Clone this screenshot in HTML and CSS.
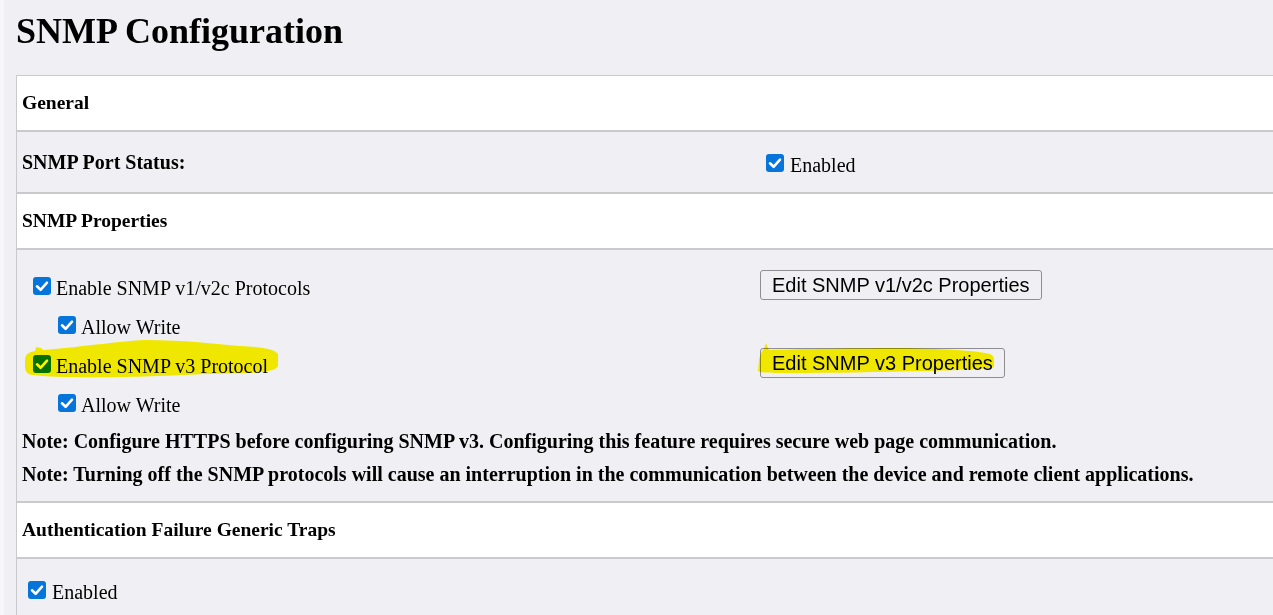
FILE: index.html
```html
<!DOCTYPE html>
<html lang="en">
<head>
<meta charset="utf-8">
<title>SNMP Configuration</title>
<link rel="stylesheet" href="styles.css">
</head>
<body>
<div class="page">
  <h1 class="title">SNMP Configuration</h1>
  <div class="panel">
    <div class="sec-head">General</div>
    <div class="row">
      <div class="label">SNMP Port Status:</div>
      <div class="value port-value"><svg class="cb" viewBox="0 0 18 18"><rect width="18" height="18" rx="3" fill="#0574db"/><path d="M4 9.3 7.6 12.8 14 5.6" fill="none" stroke="#fff" stroke-width="2.6" stroke-linecap="round" stroke-linejoin="round"/></svg>Enabled</div>
    </div>
    <div class="sec-head">SNMP Properties</div>
    <div class="props">
      <div class="prop-grid">
        <div class="opt"><svg class="cb" viewBox="0 0 18 18"><rect width="18" height="18" rx="3" fill="#0574db"/><path d="M4 9.3 7.6 12.8 14 5.6" fill="none" stroke="#fff" stroke-width="2.6" stroke-linecap="round" stroke-linejoin="round"/></svg>Enable SNMP v1/v2c Protocols</div>
        <div class="act"><button class="btn" type="button">Edit SNMP v1/v2c Properties</button></div>
        <div class="opt sub"><svg class="cb" viewBox="0 0 18 18"><rect width="18" height="18" rx="3" fill="#0574db"/><path d="M4 9.3 7.6 12.8 14 5.6" fill="none" stroke="#fff" stroke-width="2.6" stroke-linecap="round" stroke-linejoin="round"/></svg>Allow Write</div>
        <div class="act"></div>
        <div class="opt"><svg class="cb" viewBox="0 0 18 18"><rect width="18" height="18" rx="3" fill="#0574db"/><path d="M4 9.3 7.6 12.8 14 5.6" fill="none" stroke="#fff" stroke-width="2.6" stroke-linecap="round" stroke-linejoin="round"/></svg>Enable SNMP v3 Protocol</div>
        <div class="act"><button class="btn" type="button">Edit SNMP v3 Properties</button></div>
        <div class="opt sub"><svg class="cb" viewBox="0 0 18 18"><rect width="18" height="18" rx="3" fill="#0574db"/><path d="M4 9.3 7.6 12.8 14 5.6" fill="none" stroke="#fff" stroke-width="2.6" stroke-linecap="round" stroke-linejoin="round"/></svg>Allow Write</div>
        <div class="act"></div>
      </div>
      <p class="note">Note: Configure HTTPS before configuring SNMP v3. Configuring this feature requires secure web page communication.</p>
      <p class="note">Note: Turning off the SNMP protocols will cause an interruption in the communication between the device and remote client applications.</p>
    </div>
    <div class="sec-head">Authentication Failure Generic Traps</div>
    <div class="row last">
      <div class="value auth-value"><svg class="cb" viewBox="0 0 18 18"><rect width="18" height="18" rx="3" fill="#0574db"/><path d="M4 9.3 7.6 12.8 14 5.6" fill="none" stroke="#fff" stroke-width="2.6" stroke-linecap="round" stroke-linejoin="round"/></svg>Enabled</div>
    </div>
  </div>
</div>
<svg class="marker" viewBox="0 0 1273 615" width="1273" height="615" aria-hidden="true">
  <path fill="#fff600" d="M25 360 C25 354 29 352 35 351 L36 347 L41 348 L43 350 C90 346 120 341 145 340 C185 340 215 344 240 346 C262 347 275 349 278 354 L278 366 C277 370 268 372 250 373 C190 374 150 377 120 377 C80 378 50 377 32 375 C26 374 25 370 25 366 Z"/>
  <path fill="#fff600" d="M758 371 L759 360 C760 354 762 351 764 349 L766 343 L769 350 C800 349 860 348 905 348 C950 349 980 351 990 354 C994 356 994 358 994 362 L994 367 C992 369 960 370 930 371 C880 372 830 373 790 373 C770 373 760 373 758 371 Z"/>
</svg>
</body>
</html>
```

FILE: styles.css
```css
html, body {
  margin: 0;
  height: 100%;
}

body {
  position: relative;
  background: #f0f0f4;
  overflow: hidden;
  color: #000;
  font-family: "Liberation Serif", "Times New Roman", serif;
  font-size: 20px;
}

.page {
  border-left: 4px solid #f7f7f9;
  padding-left: 12px;
  min-height: 615px;
  box-sizing: border-box;
}

.title {
  margin: 0 0 23px;
  padding-top: 10px;
  height: 42px;
  line-height: 42px;
  font-size: 36px;
  font-weight: bold;
}

.panel {
  border-top: 1px solid #c9c9ce;
  border-left: 1px solid #c9c9ce;
}

.sec-head {
  display: flex;
  align-items: center;
  height: 54px;
  padding-left: 5px;
  background: #fff;
  border-bottom: 2px solid #c9c9ce;
  font-size: 19.5px;
  font-weight: bold;
}

.row {
  display: grid;
  grid-template-columns: 743px 1fr;
  height: 60px;
  border-bottom: 2px solid #c9c9ce;
}

.label {
  display: flex;
  align-items: center;
  padding-left: 5px;
  font-size: 20px;
  font-weight: bold;
}

.value {
  line-height: 22px;
}

.port-value {
  padding-top: 22px;
  padding-left: 6px;
}

.auth-value {
  grid-column: 1 / -1;
  padding-top: 22px;
  padding-left: 11px;
}

.cb {
  width: 18px;
  height: 18px;
  vertical-align: baseline;
  margin-right: 6px;
}

.props {
  padding: 19px 0 10px;
  border-bottom: 2px solid #c9c9ce;
}

.prop-grid {
  display: grid;
  grid-template-columns: 743px 1fr;
  grid-auto-rows: 39px;
}

.opt {
  line-height: 39px;
  padding-left: 16px;
  white-space: nowrap;
}

.opt .cb {
  margin-right: 5px;
}

.opt.sub {
  padding-left: 41px;
}

.act {
  padding-top: 1px;
}

.btn {
  height: 30px;
  padding: 0 11px;
  line-height: 28px;
  border: 1px solid #8d8d92;
  border-radius: 3px;
  background: #f0f0f4;
  color: #000;
  font-family: "Liberation Sans", Arial, sans-serif;
  font-size: 20px;
  box-sizing: border-box;
}

.note {
  margin: 0;
  padding-left: 5px;
  line-height: 33px;
  font-size: 20px;
  font-weight: bold;
  white-space: nowrap;
}

.marker {
  position: absolute;
  left: 0;
  top: 0;
  pointer-events: none;
  mix-blend-mode: multiply;
}
```
